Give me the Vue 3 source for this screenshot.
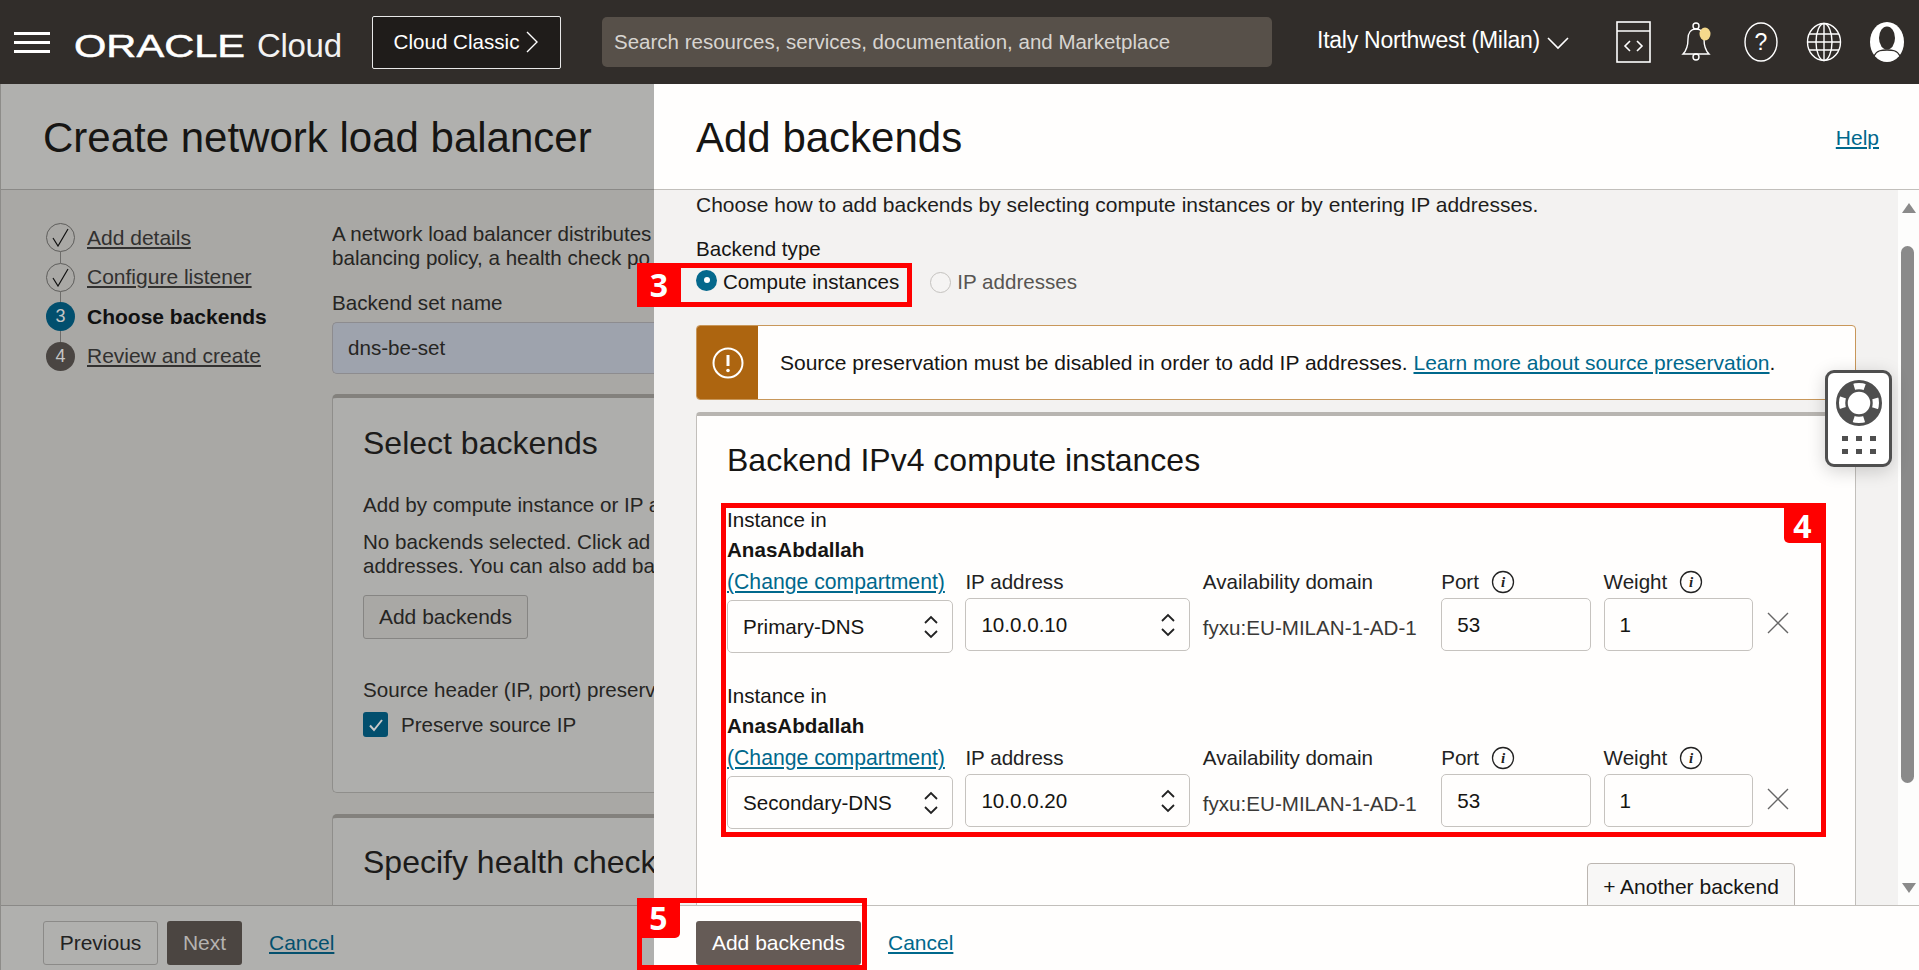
<script setup>
const steps = [
  { label: 'Add details', state: 'done' },
  { label: 'Configure listener', state: 'done' },
  { label: 'Choose backends', state: 'current', n: 3 },
  { label: 'Review and create', state: 'todo', n: 4 },
]
const backends = [
  { name: 'Primary-DNS', ip: '10.0.0.10' },
  { name: 'Secondary-DNS', ip: '10.0.0.20' },
]
</script>

<template>
  <div class="app">
    <header class="topbar">
      <div class="burger"><i></i><i></i><i></i></div>
      <div class="brand"><span class="oracle">ORACLE</span><span class="cloud">Cloud</span></div>
      <div class="classic">Cloud Classic
        <svg width="14" height="22" viewBox="0 0 14 22"><path d="M2 1l10 10L2 21" fill="none" stroke="#fff" stroke-width="1.4"/></svg>
      </div>
      <div class="search">Search resources, services, documentation, and Marketplace</div>
      <div class="region">Italy Northwest (Milan)
        <svg width="22" height="14" viewBox="0 0 22 14"><path d="M1 2l10 10L21 2" fill="none" stroke="#fff" stroke-width="1.6"/></svg>
      </div>
      <div class="icons">
        <svg width="36" height="42" viewBox="0 0 36 42" fill="none" stroke="#fff" stroke-width="1.6"><rect x="1" y="1" width="33" height="40"/><path d="M1 10h33"/><path d="M14 20l-5 5 5 5M21 20l5 5-5 5"/></svg>
        <svg width="36" height="40" viewBox="0 0 36 40" fill="none" stroke="#fff" stroke-width="1.4"><path d="M3 32c4-4 5-8 5-15 0-6 3-10 8-10s8 4 8 10c0 7 1 11 5 15z"/><circle cx="16" cy="4" r="3"/><circle cx="16" cy="35" r="3"/><ellipse cx="25" cy="12" rx="5.5" ry="6.5" fill="#f5d98c" stroke="none"/></svg>
        <svg width="34" height="40" viewBox="0 0 34 40" fill="none" stroke="#fff" stroke-width="1.4"><ellipse cx="17" cy="20" rx="16" ry="19"/><text x="17" y="28" text-anchor="middle" class="q">?</text></svg>
        <svg width="36" height="40" viewBox="0 0 36 40" fill="none" stroke="#fff" stroke-width="1.4"><ellipse cx="18" cy="20" rx="16.5" ry="18.5"/><ellipse cx="18" cy="20" rx="8" ry="18.5"/><path d="M18 1.5v37M3 12h30M3 28h30M1.5 20h33"/></svg>
        <svg width="34" height="42" viewBox="0 0 34 42"><ellipse cx="17" cy="21" rx="17" ry="20" fill="#fff"/><ellipse cx="17" cy="17" rx="8" ry="11.5" fill="#312d2a"/><path d="M4 35c3-6 8-6 13-6s10 0 13 6" fill="none" stroke="#312d2a" stroke-width="1.3"/></svg>
      </div>
    </header>

    <main class="main">
      <section class="page">
        <div class="page-head"><h1>Create network load balancer</h1></div>
        <div class="page-body">
          <ol class="steps">
            <li v-for="s in steps" :key="s.label" class="step" :class="s.state">
              <span class="dot">
                <svg v-if="s.state === 'done'" width="17" height="19" viewBox="0 0 17 19"><path d="M1 10l5 8L16 1" fill="none" stroke="#111" stroke-width="1.2"/></svg>
                <template v-else>{{ s.n }}</template>
              </span>
              <span class="step-label">{{ s.label }}</span>
            </li>
          </ol>
          <div class="page-form">
            <p class="intro">A network load balancer distributes<br>balancing policy, a health check po</p>
            <label class="lab">Backend set name</label>
            <div class="ghost-input">dns-be-set</div>
            <div class="ghost-card">
              <h2>Select backends</h2>
              <p class="p1">Add by compute instance or IP a</p>
              <p class="p2">No backends selected. Click ad<br>addresses. You can also add ba</p>
              <div class="ghost-btn">Add backends</div>
              <p class="p3">Source header (IP, port) preserv</p>
              <div class="check">
                <span class="box"><svg width="18" height="18" viewBox="0 0 18 18"><path d="M3 9.5l4 4.5L15 4" fill="none" stroke="#c9c9c9" stroke-width="2"/></svg></span>
                Preserve source IP
              </div>
            </div>
            <div class="ghost-card second"><h2>Specify health check</h2></div>
          </div>
        </div>
        <div class="page-foot">
          <span class="btn prev">Previous</span>
          <span class="btn next">Next</span>
          <a class="cancel">Cancel</a>
        </div>
      </section>

      <section class="drawer">
        <div class="drawer-head"><h1>Add backends</h1><a class="help">Help</a></div>
        <div class="drawer-body">
          <div class="scroll-area">
            <p class="choose">Choose how to add backends by selecting compute instances or by entering IP addresses.</p>
            <div class="type-label">Backend type</div>
            <div class="radios">
              <span class="radio on"><i></i></span><span class="r-text">Compute instances</span>
              <span class="radio off"></span><span class="r-text muted">IP addresses</span>
            </div>
            <div class="warning">
              <div class="warn-side">
                <svg width="32" height="32" viewBox="0 0 32 32" fill="none"><circle cx="16" cy="16" r="14.5" stroke="#fff" stroke-width="2"/><path d="M16 8v11" stroke="#fff" stroke-width="3"/><circle cx="16" cy="23.5" r="1.8" fill="#fff"/></svg>
              </div>
              <div class="warn-text">Source preservation must be disabled in order to add IP addresses. <a>Learn more about source preservation</a>.</div>
            </div>
            <div class="card">
              <h2>Backend IPv4 compute instances</h2>
              <div v-for="(b, i) in backends" :key="b.ip" class="backend" :class="{ later: i > 0 }">
                <div class="inst">Instance in</div>
                <div class="comp">AnasAbdallah</div>
                <div class="grid">
                  <a class="change">(Change compartment)</a>
                  <span class="hd">IP address</span>
                  <span class="hd">Availability domain</span>
                  <span class="hd">Port <svg class="info" width="24" height="24" viewBox="0 0 24 24"><circle cx="12" cy="12" r="10.5" fill="none" stroke="#222" stroke-width="1.3"/><text x="12" y="17" text-anchor="middle" class="i">i</text></svg></span>
                  <span class="hd">Weight <svg class="info" width="24" height="24" viewBox="0 0 24 24"><circle cx="12" cy="12" r="10.5" fill="none" stroke="#222" stroke-width="1.3"/><text x="12" y="17" text-anchor="middle" class="i">i</text></svg></span>
                  <span></span>
                  <div class="field sel low">{{ b.name }}<svg class="updown" width="16" height="24" viewBox="0 0 16 24"><path d="M2 8l6-6 6 6M2 16l6 6 6-6" fill="none" stroke="#222" stroke-width="1.8"/></svg></div>
                  <div class="field sel">{{ b.ip }}<svg class="updown" width="16" height="24" viewBox="0 0 16 24"><path d="M2 8l6-6 6 6M2 16l6 6 6-6" fill="none" stroke="#222" stroke-width="1.8"/></svg></div>
                  <div class="ad">fyxu:EU-MILAN-1-AD-1</div>
                  <div class="field">53</div>
                  <div class="field">1</div>
                  <svg class="x" width="22" height="22" viewBox="0 0 22 22"><path d="M1 1l20 20M21 1L1 21" stroke="#666" stroke-width="1.4"/></svg>
                </div>
              </div>
              <div class="another-row"><span class="another">+ Another backend</span></div>
            </div>
          </div>
          <div class="scrollbar">
            <svg width="14" height="10" viewBox="0 0 14 10"><path d="M7 0l7 10H0z" fill="#8a8a8a"/></svg>
            <div class="thumb"></div>
            <svg width="14" height="10" viewBox="0 0 14 10"><path d="M7 10L0 0h14z" fill="#8a8a8a"/></svg>
          </div>
        </div>
        <div class="drawer-foot">
          <span class="btn primary">Add backends</span>
          <a class="cancel">Cancel</a>
        </div>
      </section>
    </main>

    <div class="widget">
      <svg width="46" height="46" viewBox="0 0 46 46" fill="none"><circle cx="23" cy="23" r="17" stroke="#4f4f4f" stroke-width="10" stroke-dasharray="16 10.7" stroke-dashoffset="-5.3"/><circle cx="23" cy="23" r="21.5" stroke="#4f4f4f" stroke-width="3"/><circle cx="23" cy="23" r="12.5" stroke="#4f4f4f" stroke-width="2.5"/></svg>
      <div class="dots"><i v-for="n in 6" :key="n"></i></div>
    </div>

    <div class="mark m3"><span class="badge">3</span></div>
    <div class="mark m4"><span class="badge">4</span></div>
    <div class="mark m5"><span class="badge">5</span></div>
  </div>
</template>

<style scoped>
.app { position: relative; width: 1919px; height: 970px; overflow: hidden; display: flex; flex-direction: column; font-family: "Liberation Sans", Arial, sans-serif; font-size: 21px; color: #161513; }
a { text-decoration: underline; cursor: pointer; }
h1, h2, p, ol { margin: 0; padding: 0; font-weight: 400; }

.topbar { height: 84px; flex: none; background: #312d2a; display: flex; align-items: center; color: #fff; }
.burger { width: 36px; margin-left: 14px; display: flex; flex-direction: column; gap: 6px; }
.burger i { height: 3px; background: #fff; display: block; }
.brand { margin-left: 25px; width: 297px; display: flex; align-items: center; flex: none; padding-top: 8px; box-sizing: border-box; }
.oracle { display: inline-block; font-size: 32px; width: 123px; white-space: nowrap; transform: scaleX(1.3); transform-origin: left center; -webkit-text-stroke: .5px #fff; margin-left: -1px; }
.cloud { margin-left: 60px; font-size: 33px; letter-spacing: -.3px; color: #f2f2f2; }
.classic { width: 189px; height: 53px; box-sizing: border-box; background: #1f1c1a; border: 1px solid #e8e8e8; border-radius: 2px; display: flex; align-items: center; justify-content: center; gap: 6px; font-size: 20.6px; flex: none; }
.search { margin-left: 41px; width: 670px; height: 50px; box-sizing: border-box; padding-left: 12px; background: #575049; border-radius: 5px; display: flex; align-items: center; color: #d8d5d1; font-size: 20.5px; flex: none; }
.region { margin-left: 45px; width: 299px; flex: none; display: flex; align-items: center; gap: 7px; font-size: 23px; letter-spacing: -.25px; margin-top: -4px; white-space: nowrap; }
.region svg { margin-top: 5px; }
.icons { display: flex; align-items: center; gap: 28px; }

.main { flex: 1; display: flex; min-height: 0; }
.page { width: 654px; flex: none; display: flex; flex-direction: column; background: #a9a8a5; border-left: 1px solid #8d8c89; box-sizing: border-box; overflow: hidden; }
.page-head { height: 106px; flex: none; box-sizing: border-box; background: #b0b0ae; border-bottom: 1px solid #8a8987; padding: 29px 0 0 42px; }
.page-head h1, .drawer-head h1 { font-size: 42px; line-height: 50px; white-space: nowrap; }
.page-body { flex: 1; display: flex; min-height: 0; overflow: hidden; }
.steps { list-style: none; width: 331px; flex: none; padding: 33px 0 0 45px; box-sizing: border-box; }
.step { display: flex; align-items: center; height: 29px; margin-bottom: 10.6px; position: relative; gap: 12px; }
.step:not(:last-child)::after { content: ""; position: absolute; left: 14px; top: 29px; height: 11px; width: 1px; background: #6e6d6b; }
.dot { width: 29px; height: 29px; border-radius: 50%; box-sizing: border-box; display: flex; align-items: center; justify-content: center; flex: none; color: #c5c5c5; font-size: 18px; }
.done .dot { border: 1px solid #5f5e5c; }
.current .dot { background: #024f6e; }
.todo .dot { background: #4a4542; }
.step-label { text-decoration: underline; color: #323130; white-space: nowrap; }
.current .step-label { text-decoration: none; font-weight: 700; color: #111; }
.page-form { flex: 1; min-width: 0; overflow: hidden; color: #262523; padding-top: 32px; white-space: nowrap; font-size: 20.6px; }
.intro { line-height: 24px; }
.lab { display: block; margin-top: 21px; line-height: 24px; }
.ghost-input { margin-top: 7px; height: 52px; box-sizing: border-box; background: #9ea3ad; border: 1px solid #8d8c8f; border-right: 0; border-radius: 5px 0 0 5px; padding-left: 15px; display: flex; align-items: center; margin-bottom: 20px; }
.ghost-card { background: #aeaeac; border: 1px solid #8f8e8b; border-top: 4px solid #83817d; border-right: 0; border-radius: 5px 0 0 5px; padding: 25px 0 0 30px; height: 399px; box-sizing: border-box; }
.ghost-card h2 { font-size: 32px; line-height: 40px; color: #1c1b1a; }
.p1 { margin-top: 30px; line-height: 24px; }
.p2 { margin-top: 13px; line-height: 24px; }
.ghost-btn { margin-top: 17px; width: 165px; height: 44px; box-sizing: border-box; background: #a9a8a5; border: 1px solid #868583; border-radius: 3px; display: flex; align-items: center; justify-content: center; font-size: 21px; }
.p3 { margin-top: 39px; line-height: 24px; }
.check { display: flex; align-items: center; gap: 13px; margin-top: 10px; }
.box { width: 25px; height: 25px; box-sizing: border-box; background: #024f6e; border-radius: 3px; display: flex; align-items: center; justify-content: center; }
.second { margin-top: 21px; padding-top: 24px; }

.page-foot { height: 65px; flex: none; box-sizing: border-box; background: #b0b0ae; border-top: 1px solid #8a8987; display: flex; align-items: center; padding: 10px 0 0 42px; }
.btn { height: 44px; box-sizing: border-box; border-radius: 3px; display: inline-flex; align-items: center; justify-content: center; }
.prev { width: 115px; border: 1px solid #8b8a88; color: #222; }
.next { width: 75px; margin-left: 9px; background: #4b4541; color: #b5b3b0; }
.cancel { color: #04506e; }
.page-foot .cancel { margin-left: 27px; }

.drawer { flex: 1; min-width: 0; display: flex; flex-direction: column; background: #fffefd; }
.drawer-head { height: 106px; flex: none; box-sizing: border-box; border-bottom: 1px solid #c2bfbb; padding: 29px 40px 0 42px; display: flex; justify-content: space-between; }
.help { color: #00688c; margin-top: 13px; font-size: 21px; }
.drawer-body { flex: 1; min-height: 0; display: flex; overflow: hidden; }
.scroll-area { flex: 1; min-width: 0; background: #f3f2f1; overflow: hidden; padding: 0 42px 0 42px; }
.scrollbar { width: 21px; flex: none; background: #fdfdfc; display: flex; flex-direction: column; align-items: center; padding: 13px 0 12px; box-sizing: border-box; }
.thumb { width: 13px; margin: 33px 3px auto 0; height: 537px; background: #8a8a8a; border-radius: 7px; }
.choose { line-height: 24px; margin-top: 3px; color: #1e1d1b; white-space: nowrap; }
.type-label { margin-top: 20px; line-height: 24px; font-size: 20.6px; }
.radios { display: flex; align-items: center; margin-top: 6px; height: 30px; font-size: 20.6px; }
.radio { width: 21px; height: 21px; border-radius: 50%; box-sizing: border-box; flex: none; display: flex; align-items: center; justify-content: center; }
.radio.on { background: #04688c; margin-top: -4px; }
.radio.on i { width: 6px; height: 6px; border-radius: 50%; background: #fff; }
.radio.off { border: 1px solid #c4c2bf; background: #f5f4f3; margin-left: 31px; }
.r-text { margin-left: 6px; }
.muted { color: #575552; }
.warning { margin-top: 28px; height: 75px; box-sizing: border-box; display: flex; background: #fffefd; border: 1px solid #c8975a; border-radius: 4px; overflow: hidden; }
.warn-side { width: 61px; background: #ad6510; display: flex; align-items: center; justify-content: center; flex: none; }
.warn-text { margin-left: 22px; align-self: center; white-space: nowrap; }
.warn-text a { color: #00688c; }
.card { margin-top: 12px; height: 600px; background: #fffefd; border: 1px solid #c2bfbb; border-top: 4px solid #b8b5b1; border-radius: 4px 4px 0 0; padding: 24px 30px 0 30px; box-sizing: border-box; font-size: 20.6px; }
.card h2 { font-size: 32px; line-height: 40px; white-space: nowrap; }
.backend { margin-top: 25px; }
.backend.later { margin-top: 30px; }
.inst, .comp { line-height: 30px; }
.comp { font-weight: 700; }
.grid { display: grid; grid-template-columns: 226px 225px 226px 150px 149.5px 24px; column-gap: 12.4px; align-items: center; row-gap: 2px; margin-top: 3px; }
.change { color: #00688c; white-space: nowrap; font-size: 21.2px; }
.hd { display: inline-flex; align-items: center; gap: 12px; line-height: 28px; white-space: nowrap; color: #222; }
.field { height: 53px; box-sizing: border-box; border: 1px solid #c6c3bf; border-radius: 5px; background: #fffefd; padding-left: 15px; display: flex; align-items: center; position: relative; }
.sel { justify-content: space-between; padding-right: 13px; }
.low { transform: translateY(2px); }
.ad { color: #3a3937; padding-top: 6px; white-space: nowrap; }
.x { margin-left: 2px; margin-top: -3px; }
.another-row { display: flex; justify-content: flex-end; padding: 36px 30px 0 0; }
.another { width: 208px; height: 48px; box-sizing: border-box; background: #f8f7f6; border: 1px solid #bcb6b1; border-radius: 4px; display: flex; align-items: center; justify-content: center; font-size: 21px; }

.drawer-foot { height: 65px; flex: none; box-sizing: border-box; border-top: 1px solid #c2bfbb; display: flex; align-items: center; padding: 10px 0 0 42px; }
.primary { width: 165px; background: #655b56; color: #fff; }
.drawer-foot .cancel { margin-left: 27px; color: #00688c; }

.widget { position: absolute; left: 1825px; top: 370px; width: 67px; height: 97px; box-sizing: border-box; background: #fff; border: 3px solid #4f4f4f; border-radius: 9px; box-shadow: 0 4px 18px rgba(0,0,0,.18); display: flex; flex-direction: column; align-items: center; padding-top: 7px; }
.dots { display: grid; grid-template-columns: repeat(3, 6px); gap: 8px 8px; margin-top: 10px; }
.dots i { width: 6px; height: 5px; background: #4f4f4f; display: block; }

.mark { position: absolute; box-sizing: border-box; border: 5px solid #f00; pointer-events: none; }
.badge { position: absolute; background: #f00; color: #fff; font: 700 32px/40px "Open Sans", "Liberation Sans", sans-serif; text-align: center; }
.m3 { left: 637px; top: 263px; width: 275px; height: 44px; }
.m3 .badge { left: -5px; top: -5px; width: 44px; height: 44px; line-height: 44px; border-radius: 0 0 4px 0; }
.m4 { left: 721px; top: 503px; width: 1105px; height: 334px; }
.m4 .badge { right: 0; top: 0; width: 37px; height: 35px; line-height: 35px; border-radius: 0 0 0 5px; }
.m5 { left: 637px; top: 898px; width: 230px; height: 72px; }
.m5 .badge { left: -5px; top: -5px; width: 43px; height: 40px; border-radius: 0 0 5px 0; }
</style>

<style>
html, body { margin: 0; background: #fff; }
.q { font: 23px "Liberation Sans", sans-serif; fill: #fff; stroke: none; }
.i { font: italic 700 15px "Liberation Serif", serif; fill: #222; stroke: none; }
</style>
